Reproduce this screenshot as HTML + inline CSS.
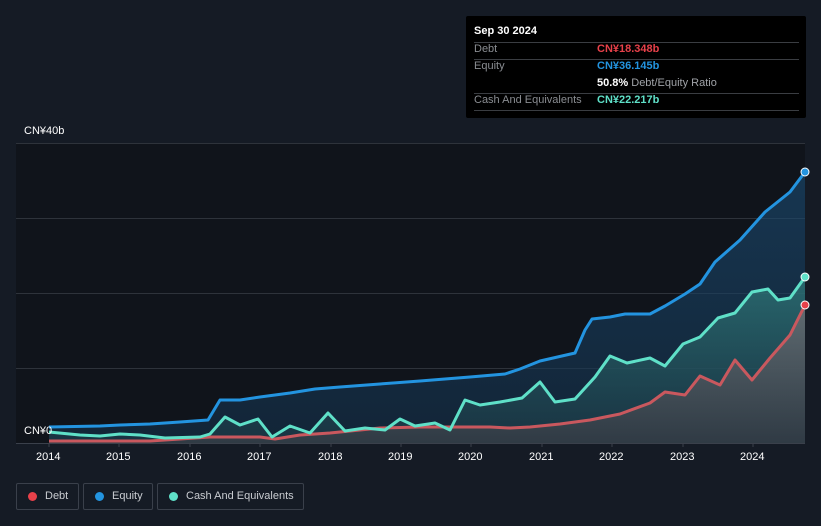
<!DOCTYPE html>
<html><head><meta charset="utf-8"><style>
body{margin:0;width:821px;height:526px;background:#151b25;font-family:"Liberation Sans",sans-serif;overflow:hidden;position:relative}
.t{position:absolute;font-size:11px;color:#fff}
.leg{position:absolute;top:483px;height:27px;border:1px solid #3a404b;border-radius:2px;box-sizing:border-box;color:#c9ccd1;font-size:11px;line-height:25px}
.leg i{position:absolute;left:11px;top:8px;width:9px;height:9px;border-radius:50%}
.tip{position:absolute;left:466px;top:16px;width:340px;height:102px;background:#000;border-radius:2px}
.row{position:absolute;left:8px;width:325px;font-size:11px;color:#8a8d92;border-bottom:1px solid #3a3d42;height:16px}
.row b{position:absolute;left:123px;font-weight:bold}
</style></head><body>
<svg width="821" height="526" style="position:absolute;left:0;top:0">
<defs>
<linearGradient id="ge" x1="0" y1="0" x2="0" y2="1"><stop offset="0" stop-color="#1b4d75" stop-opacity=".6"/><stop offset="1" stop-color="#14304a" stop-opacity=".6"/></linearGradient>
<linearGradient id="gc" x1="0" y1="0" x2="0" y2="1"><stop offset="0" stop-color="#2f7a7a" stop-opacity=".75"/><stop offset="1" stop-color="#1d3c48" stop-opacity=".6"/></linearGradient>
<linearGradient id="gd" x1="0" y1="0" x2="0" y2="1"><stop offset="0" stop-color="#6e6e74" stop-opacity=".8"/><stop offset="1" stop-color="#3a3e46" stop-opacity=".7"/></linearGradient>
</defs>
<rect x="16" y="143" width="789" height="300" fill="#10141b"/>
<g stroke="#2e333b" stroke-width="1"><line x1="16" y1="143.5" x2="805" y2="143.5"/><line x1="16" y1="218.5" x2="805" y2="218.5"/><line x1="16" y1="293.5" x2="805" y2="293.5"/><line x1="16" y1="368.5" x2="805" y2="368.5"/></g>
<path d="M49,427 L100,426 L120,425 L150,424 L180,422 L208,420 L220,400 L240,400 L260,397 L290,393 L315,389 L340,387 L380,384 L420,381 L470,377 L505,374 L520,369 L540,361 L575,353 L585,330 L592,319 L610,317 L625,314 L650,314 L665,306 L685,294 L700,284 L715,262 L740,240 L765,212 L790,192 L805,172 L805,443 L49,443Z" fill="url(#ge)"/>
<path d="M49,432 L80,435 L100,436 L120,434 L140,435 L165,438 L200,437 L210,434 L225,417 L240,425 L258,419 L272,437 L290,426 L310,433 L328,413 L345,431 L365,428 L385,430 L400,419 L415,426 L435,423 L450,430 L465,400 L480,405 L500,402 L522,398 L540,382 L555,402 L575,399 L595,377 L610,356 L627,363 L650,358 L665,366 L683,344 L700,337 L718,318 L735,313 L752,292 L768,289 L778,300 L790,298 L805,277 L805,443 L49,443Z" fill="url(#gc)"/>
<path d="M49,441 L150,441 L210,437 L260,437 L275,439 L300,435 L330,433 L360,430 L380,428 L420,427 L490,427 L510,428 L530,427 L560,424 L590,420 L620,414 L650,403 L665,392 L685,395 L700,376 L720,385 L735,360 L752,380 L770,358 L790,335 L805,305 L805,443 L49,443Z" fill="url(#gd)"/>
<g fill="none" stroke-width="3" stroke-linejoin="round">
<path d="M49,427 L100,426 L120,425 L150,424 L180,422 L208,420 L220,400 L240,400 L260,397 L290,393 L315,389 L340,387 L380,384 L420,381 L470,377 L505,374 L520,369 L540,361 L575,353 L585,330 L592,319 L610,317 L625,314 L650,314 L665,306 L685,294 L700,284 L715,262 L740,240 L765,212 L790,192 L805,172" stroke="#2394e0"/>
<path d="M49,441 L150,441 L210,437 L260,437 L275,439 L300,435 L330,433 L360,430 L380,428 L420,427 L490,427 L510,428 L530,427 L560,424 L590,420 L620,414 L650,403 L665,392 L685,395 L700,376 L720,385 L735,360 L752,380 L770,358 L790,335 L805,305" stroke="#c9585e"/>
<path d="M49,432 L80,435 L100,436 L120,434 L140,435 L165,438 L200,437 L210,434 L225,417 L240,425 L258,419 L272,437 L290,426 L310,433 L328,413 L345,431 L365,428 L385,430 L400,419 L415,426 L435,423 L450,430 L465,400 L480,405 L500,402 L522,398 L540,382 L555,402 L575,399 L595,377 L610,356 L627,363 L650,358 L665,366 L683,344 L700,337 L718,318 L735,313 L752,292 L768,289 L778,300 L790,298 L805,277" stroke="#5fe0c8"/>
</g>
<circle cx="805" cy="172" r="4" fill="#2394e0" stroke="#fff" stroke-width="1"/>
<circle cx="805" cy="277" r="4" fill="#5fe0c8" stroke="#fff" stroke-width="1"/>
<circle cx="805" cy="305" r="4" fill="#e8414a" stroke="#fff" stroke-width="1"/>
<line x1="16" y1="443.5" x2="805" y2="443.5" stroke="#3a404b"/>
<g stroke="#3a404b"><line x1="49" y1="443" x2="49" y2="447"/><line x1="119" y1="443" x2="119" y2="447"/><line x1="190" y1="443" x2="190" y2="447"/><line x1="260" y1="443" x2="260" y2="447"/><line x1="331" y1="443" x2="331" y2="447"/><line x1="401" y1="443" x2="401" y2="447"/><line x1="471" y1="443" x2="471" y2="447"/><line x1="542" y1="443" x2="542" y2="447"/><line x1="612" y1="443" x2="612" y2="447"/><line x1="683" y1="443" x2="683" y2="447"/><line x1="753" y1="443" x2="753" y2="447"/></g>
</svg>
<div class="t" style="left:24px;top:125px">CN¥40b</div>
<div class="t" style="left:24px;top:425px">CN¥0</div>
<div class="t" style="left:36px;top:451px">2014</div><div class="t" style="left:106px;top:451px">2015</div><div class="t" style="left:177px;top:451px">2016</div><div class="t" style="left:247px;top:451px">2017</div><div class="t" style="left:318px;top:451px">2018</div><div class="t" style="left:388px;top:451px">2019</div><div class="t" style="left:458px;top:451px">2020</div><div class="t" style="left:529px;top:451px">2021</div><div class="t" style="left:599px;top:451px">2022</div><div class="t" style="left:670px;top:451px">2023</div><div class="t" style="left:740px;top:451px">2024</div>
<div class="tip">
<div style="position:absolute;left:8px;top:9px;color:#fff;font-size:11px;font-weight:bold">Sep 30 2024</div>
<div style="position:absolute;left:8px;top:26px;width:325px;border-top:1px solid #3a3d42"></div>
<div class="row" style="top:27px">Debt<b style="color:#e8414a">CN¥18.348b</b></div>
<div class="row" style="top:44px;border:none">Equity<b style="color:#2394e0">CN¥36.145b</b></div>
<div class="row" style="top:61px"><b style="color:#fff">50.8% <span style="font-weight:normal;color:#a0a3a8">Debt/Equity Ratio</span></b></div>
<div class="row" style="top:78px">Cash And Equivalents<b style="color:#5fe0c8">CN¥22.217b</b></div>
</div>
<div class="leg" style="left:16px;width:63px"><i style="background:#e8414a"></i><span style="position:absolute;left:28px">Debt</span></div>
<div class="leg" style="left:83px;width:70px"><i style="background:#2394e0"></i><span style="position:absolute;left:28px">Equity</span></div>
<div class="leg" style="left:157px;width:147px"><i style="background:#5fe0c8"></i><span style="position:absolute;left:28px">Cash And Equivalents</span></div>
</body></html>
